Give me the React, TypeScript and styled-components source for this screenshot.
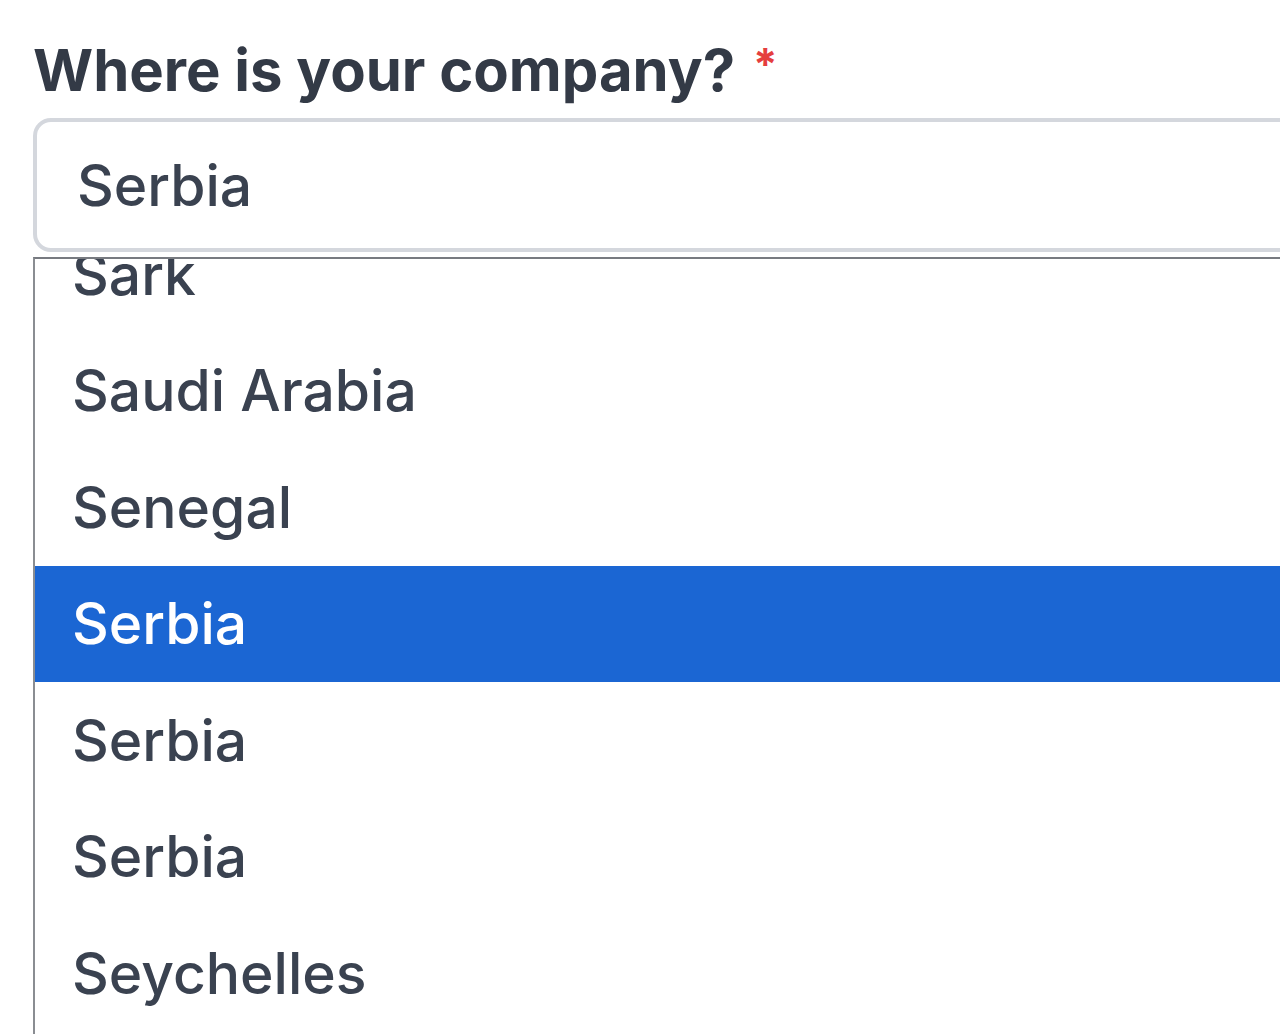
import { useLayoutEffect, useRef } from "react";
import styled, { createGlobalStyle } from "styled-components";

const GlobalStyle = createGlobalStyle`
  body {
    margin: 0;
    overflow: hidden;
    background: #ffffff;
    font-family: Inter, "Noto Sans", sans-serif;
  }
`;

const Wrapper = styled.div`
  display: flex;
  flex-direction: column;
  padding: 30px 0 0 33px;
  width: 1500px;
`;

const Label = styled.label`
  font-size: 58px;
  font-weight: 700;
  line-height: 80px;
  color: #333a46;
`;

const Required = styled.span`
  color: #e53e3e;
  margin-left: 18px;
  font-size: 44px;
  vertical-align: top;
  position: relative;
  top: -6px;
`;

const Field = styled.div`
  margin-top: 8px;
  height: 134px;
  box-sizing: border-box;
  border: 4px solid #d4d7dd;
  border-radius: 18px;
  display: flex;
  align-items: center;
  padding-left: 40px;
  font-size: 57px;
  font-weight: 500;
  color: #3a4250;
`;

const List = styled.div`
  margin-top: 5px;
  height: 775px;
  overflow: hidden;
  border-top: 2px solid #777a80;
  border-left: 2px solid #8a8d92;
  background: #ffffff;
`;

const Option = styled.div<{ $selected?: boolean }>`
  height: 116.5px;
  display: flex;
  align-items: center;
  padding-left: 37px;
  font-size: 57px;
  font-weight: 500;
  color: ${(p) => (p.$selected ? "#ffffff" : "#3a4250")};
  background: ${(p) => (p.$selected ? "#1b66d3" : "transparent")};
`;

const countries = [
  "Sark",
  "Saudi Arabia",
  "Senegal",
  "Serbia",
  "Serbia",
  "Serbia",
  "Seychelles",
  "Sierra Leone",
];

export default function App() {
  const listRef = useRef<HTMLDivElement>(null);

  useLayoutEffect(() => {
    if (listRef.current) listRef.current.scrollTop = 43;
  }, []);

  return (
    <Wrapper>
      <GlobalStyle />
      <Label>
        Where is your company?<Required>*</Required>
      </Label>
      <Field>Serbia</Field>
      <List ref={listRef}>
        {countries.map((c, i) => (
          <Option key={i} $selected={i === 3}>
            {c}
          </Option>
        ))}
      </List>
    </Wrapper>
  );
}
